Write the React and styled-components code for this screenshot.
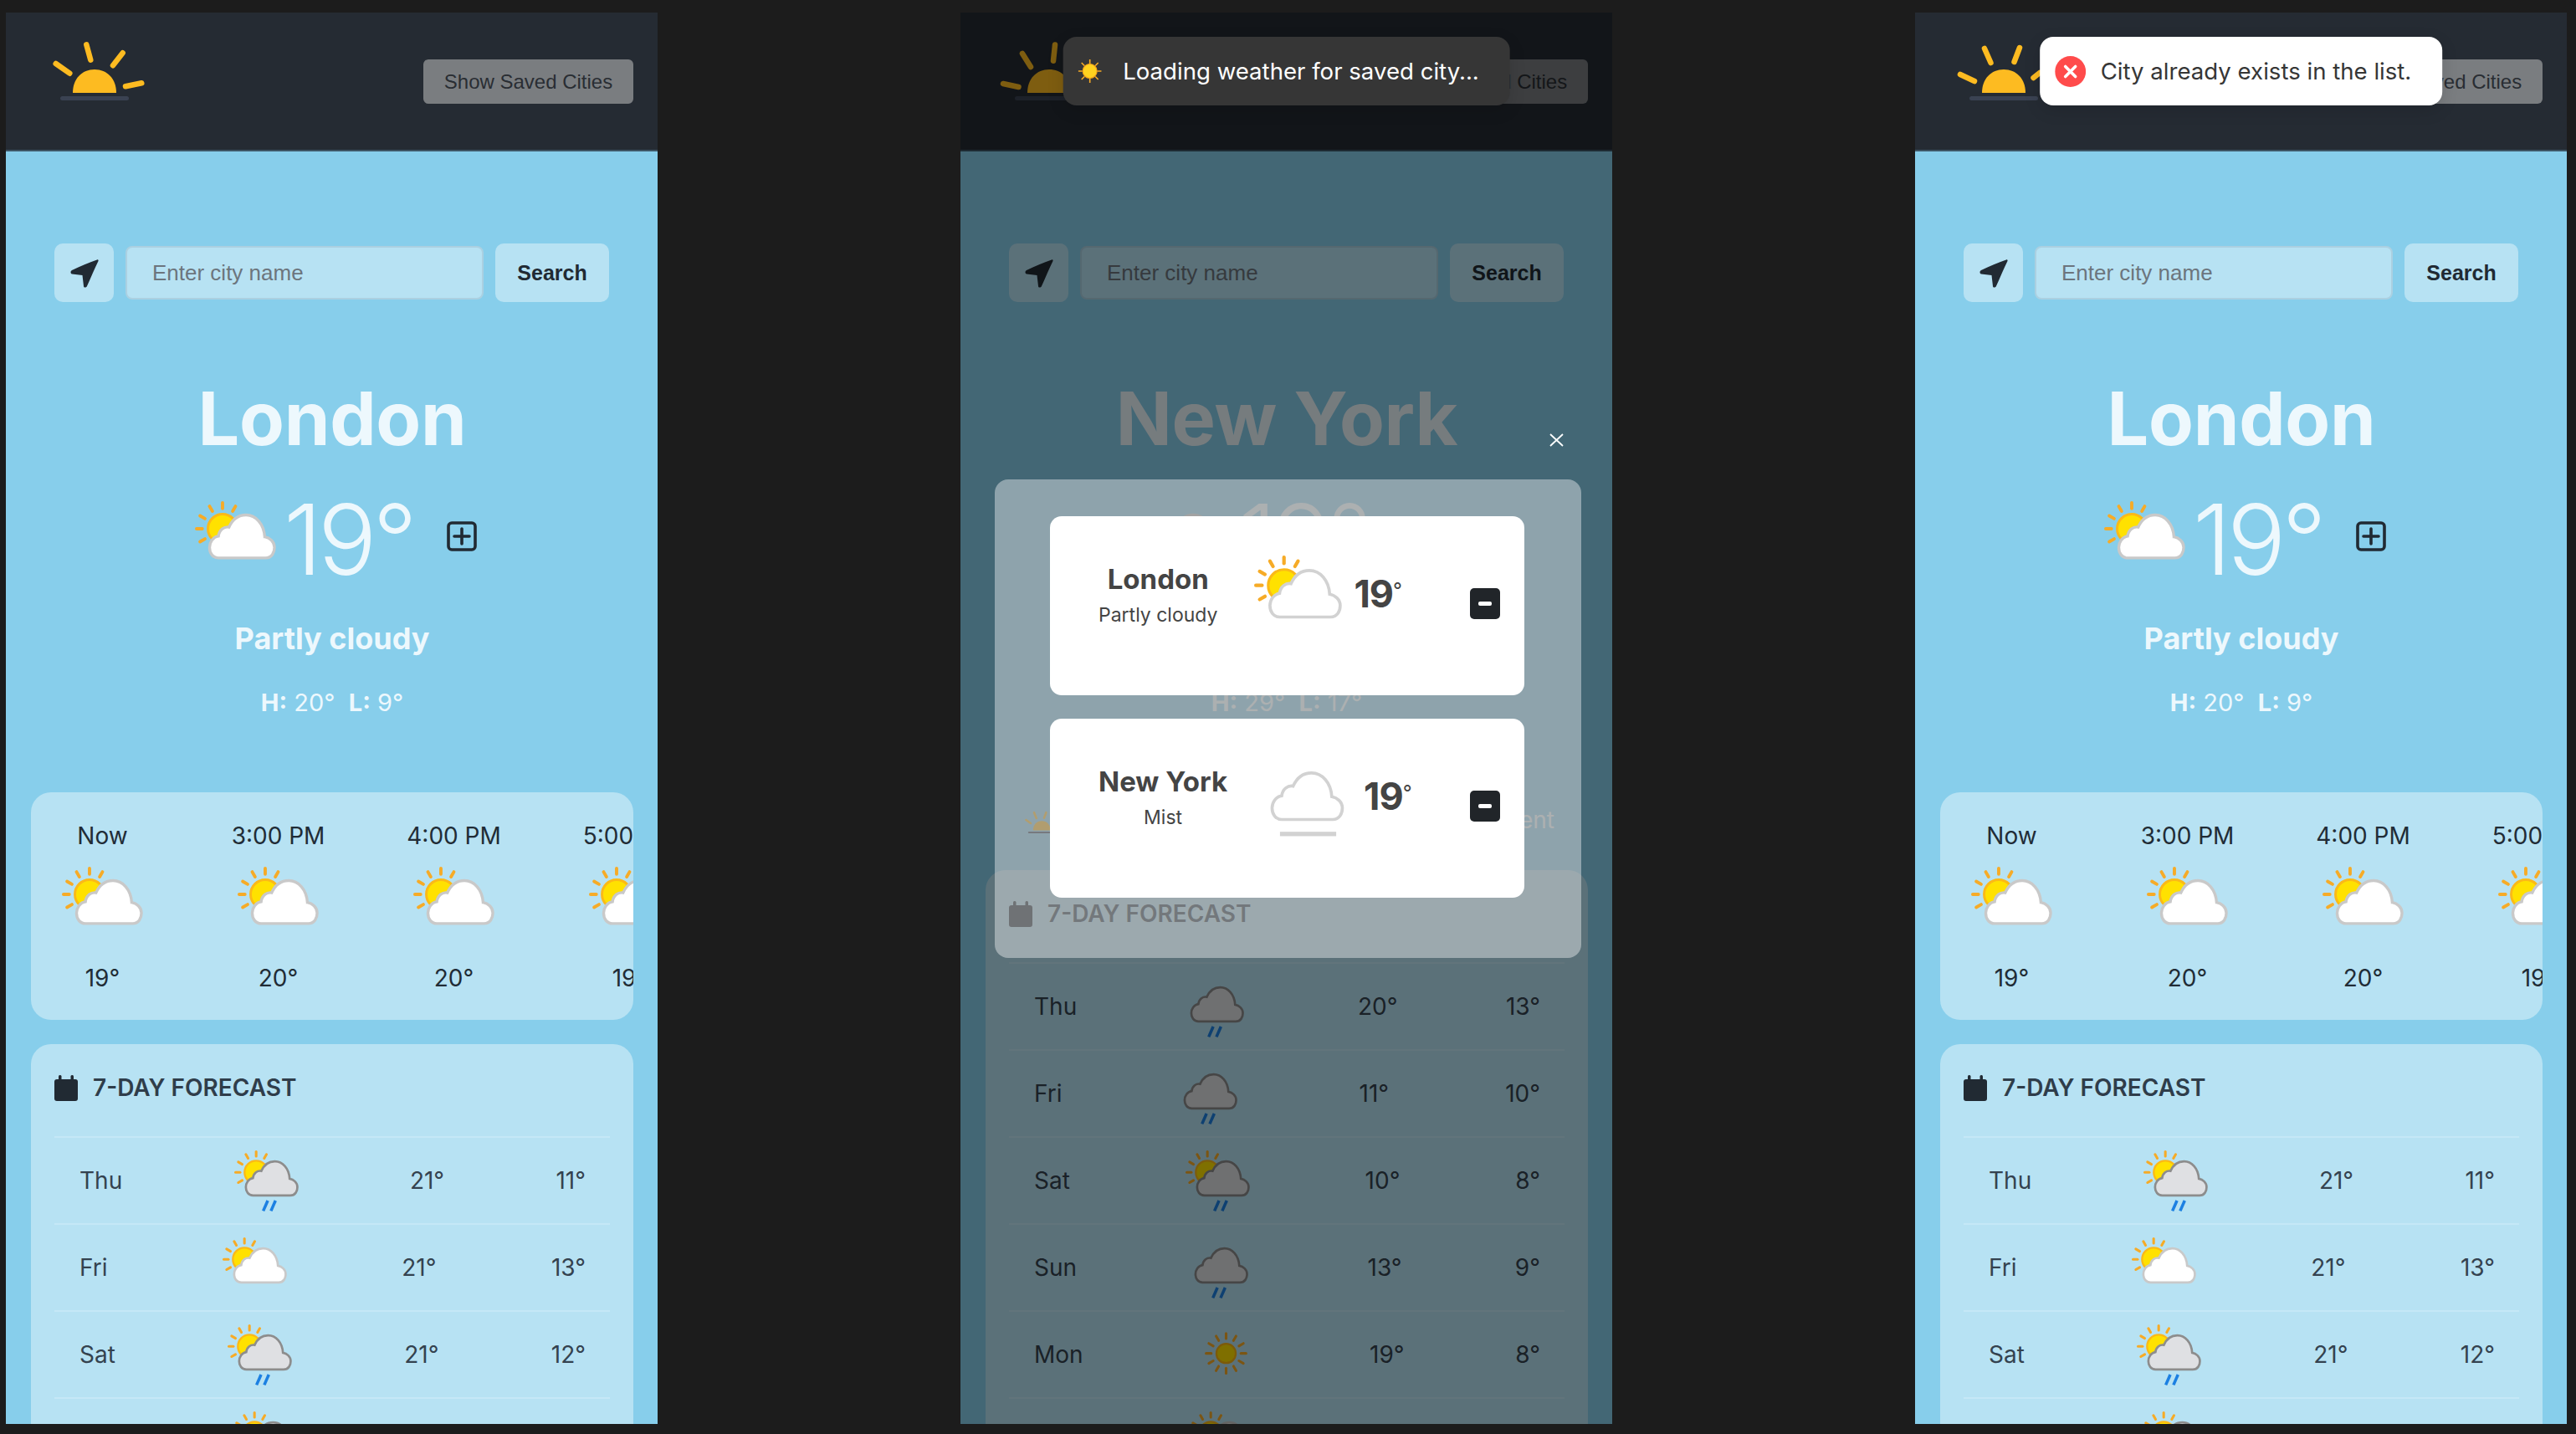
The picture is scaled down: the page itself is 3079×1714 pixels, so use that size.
import React from "react";
import styled, { createGlobalStyle } from "styled-components";

const GlobalStyle = createGlobalStyle`
    html, body {
        margin: 0;
        height: 1714px;
        overflow: hidden;
        background: #1c1c1c;
    }
    * {
        box-sizing: border-box;
    }
`;

const SKY = "#87ceeb";
const PANEL = "#b7e2f3";
const HERO_TEXT = "#edf8fd";
const DARK = "#212a33";

const londonDays = [
    { day: "Thu", icon: "sun-rain", high: 21, low: 11 },
    { day: "Fri", icon: "sun-cloud", high: 21, low: 13 },
    { day: "Sat", icon: "sun-rain", high: 21, low: 12 },
    { day: "Sun", icon: "sun-rain", high: 21, low: 12 },
];
const newYorkDays = [
    { day: "Thu", icon: "rain", high: 20, low: 13 },
    { day: "Fri", icon: "rain", high: 11, low: 10 },
    { day: "Sat", icon: "sun-rain", high: 10, low: 8 },
    { day: "Sun", icon: "rain", high: 13, low: 9 },
    { day: "Mon", icon: "sun", high: 19, low: 8 },
    { day: "Tue", icon: "sun-cloud", high: 18, low: 9 },
];
const hours = [
    { time: "Now", temp: 19 },
    { time: "3:00 PM", temp: 20 },
    { time: "4:00 PM", temp: 20 },
    { time: "5:00 PM", temp: 19 },
];

const CLOUD = "M29 70H87C95 70 98 63 98 57C98 50 92 45 86 44C85 28 75 17 63 17C53 17 46 23 42 32C36 31 30 35 29 43C22 44 18 51 18 57C18 64 22 70 29 70Z";

const Rays = ({ cx, cy, from, to, angles }) => (
    <g stroke="#f6ab27" strokeWidth="4" strokeLinecap="round">
        {angles.map((a) => {
            const r = (a * Math.PI) / 180;
            return (
                <line
                    key={a}
                    x1={cx + from * Math.cos(r)}
                    y1={cy - from * Math.sin(r)}
                    x2={cx + to * Math.cos(r)}
                    y2={cy - to * Math.sin(r)}
                />
            );
        })}
    </g>
);

const WeatherIcon = ({ kind, width, soft }) => {
    const hasSun = kind.startsWith("sun");
    const rainy = kind.endsWith("rain");
    const shift = hasSun ? 0 : -9;
    let cloudFill = "#ffffff";
    let cloudStroke = "#c9c9c9";
    if (rainy) {
        cloudFill = "#dfe0e3";
        cloudStroke = "#8d8d8d";
    }
    if (soft) cloudStroke = "#d2d2d2";

    return (
        <IconFrame $width={width} viewBox="0 0 100 94">
            {kind === "sun" && (
                <>
                    <Rays cx={50} cy={45} from={23} to={31} angles={[0, 30, 60, 90, 120, 150, 180, 210, 240, 270, 300, 330]} />
                    <circle cx="50" cy="45" r="15" fill="#ffdf00" stroke="#f9b414" strokeWidth="3" />
                </>
            )}
            {hasSun && kind !== "sun" && (
                <>
                    <Rays cx={34} cy={34} from={25} to={32} angles={[60, 90, 120, 150, 180, 210]} />
                    <circle cx="34" cy="34" r="18" fill="#ffe100" stroke="#fbb918" strokeWidth="3" />
                </>
            )}
            {kind !== "sun" && (
                <g transform={`translate(${shift} 0)`}>
                    <path d={CLOUD} fill={cloudFill} stroke={cloudStroke} strokeWidth="3.5" />
                    {rainy && (
                        <g stroke="#1c80e2" strokeWidth="4.6">
                            <line x1="45" y1="94" x2="52" y2="78" />
                            <line x1="57" y1="94" x2="64" y2="78" />
                        </g>
                    )}
                    {kind === "mist" && <rect x="27" y="84" width="64" height="5" fill="#d2d2d2" />}
                </g>
            )}
        </IconFrame>
    );
};

const Logo = ({ rays, small }) => (
    <LogoSvg $small={small} viewBox="0 0 120 80">
        <g stroke="#fdbb21" strokeWidth="6.5" strokeLinecap="round">
            {rays.map((r) => (
                <line key={r.join()} x1={r[0]} y1={r[1]} x2={r[2]} y2={r[3]} />
            ))}
        </g>
        <path d="M27 71C27 54 38 43 53 43C68 43 79 54 79 71Z" fill="#fdbb21" />
        <rect x="12" y="75" width="82" height="5" rx="2.5" fill="#3a4252" />
    </LogoSvg>
);

const GeoIcon = () => (
    <svg width="34" height="35" viewBox="0 0 34 35">
        <path
            d="M32 1.5C33 1 34 2 33.5 3C29 12 25 22 20 33C19 35 16 35 16 33L14.5 20L2 18.5C0 18 0 15 2 14C12 9 22 5 32 1.5Z"
            fill={DARK}
        />
    </svg>
);

const CalendarIcon = () => (
    <svg width="28" height="31" viewBox="0 0 28 31">
        <rect x="0" y="5" width="28" height="26" rx="3" fill={DARK} />
        <rect x="5" y="0" width="3.5" height="7" rx="1.5" fill={DARK} />
        <rect x="19.5" y="0" width="3.5" height="7" rx="1.5" fill={DARK} />
    </svg>
);

const PlusIcon = () => (
    <svg width="36" height="36" viewBox="0 0 36 36">
        <rect x="2" y="2" width="32" height="32" rx="4" fill="none" stroke={DARK} strokeWidth="3.6" />
        <path d="M18 9V27M9 18H27" stroke={DARK} strokeWidth="3.6" strokeLinecap="round" />
    </svg>
);

const ErrorIcon = () => (
    <svg width="37" height="37" viewBox="0 0 37 37">
        <circle cx="18.5" cy="18.5" r="18.5" fill="#ff4b4b" />
        <path d="M12.5 12.5L24.5 24.5M24.5 12.5L12.5 24.5" stroke="#fff" strokeWidth="3.6" strokeLinecap="round" />
    </svg>
);

const SunEmoji = () => (
    <svg width="28" height="28" viewBox="0 0 28 28">
        <g stroke="#f6ab27" strokeWidth="1.6">
            <path d="M14 0V5M14 23V28M0 14H5M23 14H28M4 4L7.5 7.5M24 4L20.5 7.5M4 24L7.5 20.5M24 24L20.5 20.5" />
        </g>
        <circle cx="14" cy="14" r="8.5" fill="#ffd21f" stroke="#f9a51a" strokeWidth="1.2" />
    </svg>
);

const CloseIcon = () => (
    <svg width="17" height="16" viewBox="0 0 17 16">
        <path d="M1 1L16 15M16 1L1 15" stroke="#fff" strokeWidth="1.8" />
    </svg>
);

const Screen = ({ logoRays, city, condition, currentIcon, high, low, days, children, showHourly = true }) => (
    <Phone>
        <Header>
            <Logo rays={logoRays} />
            <SavedButton>Show Saved Cities</SavedButton>
        </Header>
        <Main>
            <SearchRow>
                <SquareButton $width={71}>
                    <GeoIcon />
                </SquareButton>
                <CityInput placeholder="Enter city name" readOnly />
                <SquareButton $width={136}>Search</SquareButton>
            </SearchRow>
            <CityName>{city}</CityName>
            <CurrentRow>
                <WeatherIcon kind={currentIcon} width={97} />
                <CurrentTemp>19°</CurrentTemp>
                <AddButton>
                    <PlusIcon />
                </AddButton>
            </CurrentRow>
            <Condition>{condition}</Condition>
            <HighLow>
                <strong>H:</strong> {high}°&nbsp;&nbsp;<strong>L:</strong> {low}°
            </HighLow>
            {showHourly ? (
                <HourlyCard>
                    {hours.map((h) => (
                        <HourItem key={h.time}>
                            <HourText>{h.time}</HourText>
                            <WeatherIcon kind="sun-cloud" width={97} />
                            <HourTemp>{h.temp}°</HourTemp>
                        </HourItem>
                    ))}
                </HourlyCard>
            ) : (
                <SunNotice>
                    <Logo rays={[[30, 18, 37, 35], [66, 18, 60, 34], [6, 40, 20, 50], [98, 40, 86, 50]]} small />
                    <span>Sunset in a moment</span>
                </SunNotice>
            )}
            <ForecastCard>
                <ForecastTitle>
                    <CalendarIcon />
                    <span>7-DAY FORECAST</span>
                </ForecastTitle>
                {days.map((d) => (
                    <DayRow key={d.day}>
                        <DayName>{d.day}</DayName>
                        <WeatherIcon kind={d.icon} width={77} />
                        <DayTemp>{d.high}°</DayTemp>
                        <DayTemp>{d.low}°</DayTemp>
                    </DayRow>
                ))}
            </ForecastCard>
        </Main>
        {children}
    </Phone>
);

const SavedCity = ({ name, condition, icon }) => (
    <SavedCard>
        <SavedText>
            <SavedName>{name}</SavedName>
            <SavedCondition>{condition}</SavedCondition>
        </SavedText>
        <SavedIcon>
            <WeatherIcon kind={icon} width={105} soft />
        </SavedIcon>
        <SavedTemp>
            19<sup>°</sup>
        </SavedTemp>
        <RemoveButton>
            <span />
        </RemoveButton>
    </SavedCard>
);

export default function App() {
    return (
        <>
            <GlobalStyle />
            <Page>
                <Screen
                    logoRays={[[43.3, 13.3, 48.3, 31.7], [86.7, 23.3, 75, 38.3], [6.7, 36, 23.3, 47.7], [109.3, 59.3, 90, 63.3]]}
                    city="London"
                    condition="Partly cloudy"
                    currentIcon="sun-cloud"
                    high={20}
                    low={9}
                    days={londonDays}
                />
                <Screen
                    logoRays={[[60, 13.6, 58, 32.7], [21, 24, 31, 40], [-2, 60, 16.5, 64]]}
                    city="New York"
                    condition="Mist"
                    currentIcon="mist"
                    high={29}
                    low={17}
                    days={newYorkDays}
                    showHourly={false}
                >
                    <Dim>
                        <CloseSpot>
                            <CloseIcon />
                        </CloseSpot>
                        <Modal>
                            <SavedCity name="London" condition="Partly cloudy" icon="sun-cloud" />
                            <SavedCity name="New York" condition="Mist" icon="mist" />
                        </Modal>
                    </Dim>
                    <Toast $dark>
                        <SunEmoji />
                        <ToastText>Loading weather for saved city...</ToastText>
                    </Toast>
                </Screen>
                <Screen
                    logoRays={[[30, 18, 37.5, 35], [72, 17, 65.5, 34], [1, 49, 18, 57], [96, 47, 88.5, 53]]}
                    city="London"
                    condition="Partly cloudy"
                    currentIcon="sun-cloud"
                    high={20}
                    low={9}
                    days={londonDays}
                >
                    <Toast>
                        <ErrorIcon />
                        <ToastText>City already exists in the list.</ToastText>
                    </Toast>
                </Screen>
            </Page>
        </>
    );
}

const Page = styled.div`
    display: flex;
    gap: 362px;
    padding: 15px 0 0 7px;
    font-family: Inter, "Liberation Sans", sans-serif;
`;
const Phone = styled.div`
    position: relative;
    flex: 0 0 779px;
    height: 1687px;
    overflow: hidden;
    background: ${SKY};
`;
const Header = styled.header`
    display: flex;
    align-items: flex-start;
    justify-content: space-between;
    height: 166px;
    padding: 25px 29px 0 53px;
    background: #252b33;
    border-bottom: 2px solid #3d5666;
`;
const LogoSvg = styled.svg`
    flex: none;
    width: ${(p) => (p.$small ? 48 : 120)}px;
    height: ${(p) => (p.$small ? 32 : 80)}px;
    overflow: visible;
`;
const SavedButton = styled.button`
    width: 251px;
    height: 53px;
    margin-top: 31px;
    padding: 0;
    border: none;
    border-radius: 6px;
    background: #7a7d80;
    color: #292d33;
    font: 24px "Liberation Sans", Arial, sans-serif;
`;
const Main = styled.main`
    padding: 110px 29px 0 30px;
`;
const SearchRow = styled.div`
    display: flex;
    align-items: center;
    gap: 14px;
    padding: 0 0 0 28px;
    margin-right: 29px;
`;
const SquareButton = styled.button`
    flex: none;
    display: flex;
    align-items: center;
    justify-content: center;
    width: ${(p) => p.$width}px;
    height: 70px;
    padding: 0;
    border: none;
    border-radius: 10px;
    background: ${PANEL};
    color: ${DARK};
    font: bold 25px "Liberation Sans", Arial, sans-serif;
`;
const CityInput = styled.input`
    flex: 1;
    min-width: 0;
    height: 64px;
    padding: 0 0 0 30px;
    border: 2px solid #abd0e1;
    border-radius: 8px;
    background: ${PANEL};
    font: 26px "Liberation Sans", Arial, sans-serif;
    &::placeholder {
        color: #6c757d;
        opacity: 1;
    }
`;
const CityName = styled.h1`
    margin: 89px 0 0;
    color: ${HERO_TEXT};
    font-size: 88px;
    font-weight: 700;
    letter-spacing: -0.3px;
    line-height: 100px;
    text-align: center;
`;
const CurrentRow = styled.div`
    display: flex;
    align-items: center;
    height: 130px;
    margin-top: 30px;
    padding-left: 196px;
`;
const IconFrame = styled.svg`
    flex: none;
    display: block;
    width: ${(p) => p.$width}px;
    height: ${(p) => p.$width * 0.94}px;
    overflow: visible;
`;
const CurrentTemp = styled.div`
    width: 160px;
    margin-left: 9px;
    color: ${HERO_TEXT};
    font-size: 117px;
    font-weight: 300;
    letter-spacing: -5px;
    line-height: 130px;
`;
const AddButton = styled.div`
    display: flex;
    margin: 0 0 8px 35px;
`;
const Condition = styled.div`
    margin-top: 30px;
    color: ${HERO_TEXT};
    font-size: 36px;
    font-weight: 700;
    line-height: 46px;
    text-align: center;
`;
const HighLow = styled.div`
    margin-top: 34px;
    color: ${HERO_TEXT};
    font-size: 29px;
    line-height: 40px;
    text-align: center;
    strong {
        font-weight: 700;
    }
`;
const HourlyCard = styled.section`
    display: flex;
    gap: 113px;
    height: 272px;
    margin-top: 87px;
    padding: 31px 0 0 37px;
    overflow: hidden;
    border-radius: 24px;
    background: ${PANEL};
`;
const HourItem = styled.div`
    flex: 0 0 97px;
    min-width: 0;
    display: flex;
    flex-direction: column;
    align-items: center;
`;
const HourText = styled.div`
    height: 58px;
    color: #212c36;
    font-size: 28px;
    line-height: 42px;
    white-space: nowrap;
`;
const HourTemp = styled.div`
    margin-top: 21px;
    color: #212c36;
    font-size: 28px;
    line-height: 42px;
    white-space: nowrap;
`;
const SunNotice = styled.section`
    display: flex;
    align-items: center;
    justify-content: space-between;
    height: 63px;
    margin-top: 88px;
    padding: 0 40px 0 46px;
    color: #edf8fd;
    font-size: 28px;
`;
const ForecastCard = styled.section`
    margin-top: 29px;
    padding: 32px 28px 0;
    border-radius: 24px;
    background: ${PANEL};
`;
const ForecastTitle = styled.h2`
    display: flex;
    align-items: center;
    gap: 18px;
    height: 40px;
    margin: 0 0 38px;
    color: #2f3d4a;
    font-size: 28px;
    font-weight: 600;
`;
const DayRow = styled.div`
    display: flex;
    align-items: center;
    justify-content: space-between;
    height: 104px;
    padding: 0 29px 0 30px;
    border-top: 2px solid #c5e8f6;
`;
const DayName = styled.div`
    color: #34424f;
    font-size: 28px;
`;
const DayTemp = styled.div`
    color: #34424f;
    font-size: 28px;
`;
const Dim = styled.div`
    position: absolute;
    inset: 0;
    background: rgba(0, 0, 0, 0.5);
`;
const CloseSpot = styled.div`
    position: absolute;
    top: 503px;
    left: 704px;
    display: flex;
`;
const Modal = styled.div`
    position: absolute;
    top: 558px;
    left: 41px;
    display: flex;
    flex-direction: column;
    gap: 28px;
    width: 701px;
    height: 572px;
    padding: 44px 68px 0 66px;
    border-radius: 16px;
    background: rgba(255, 255, 255, 0.4);
`;
const SavedCard = styled.div`
    display: flex;
    align-items: flex-start;
    height: 214px;
    padding: 0 29px 0 58px;
    border-radius: 14px;
    background: #fff;
`;
const SavedText = styled.div`
    padding-top: 55px;
    text-align: center;
`;
const SavedName = styled.div`
    color: #444;
    font-size: 33px;
    font-weight: 700;
    line-height: 40px;
`;
const SavedCondition = styled.div`
    margin-top: 8px;
    color: #444;
    font-size: 23px;
    line-height: 30px;
    white-space: nowrap;
`;
const SavedIcon = styled.div`
    margin: 47px 0 0 44px;
`;
const SavedTemp = styled.div`
    margin: 68px 0 0 14px;
    color: #444;
    font-size: 45px;
    font-weight: 700;
    letter-spacing: -1px;
    line-height: 50px;
    sup {
        font-size: 24px;
        font-weight: 400;
        line-height: 0;
        vertical-align: 12px;
    }
`;
const RemoveButton = styled.div`
    display: flex;
    align-items: center;
    justify-content: center;
    width: 36px;
    height: 37px;
    margin: 86px 0 0 auto;
    border-radius: 5px;
    background: #212529;
    span {
        width: 16px;
        height: 5px;
        border-radius: 2px;
        background: #fff;
    }
`;
const Toast = styled.div`
    position: absolute;
    top: 29px;
    left: 50%;
    transform: translateX(-50%);
    display: flex;
    align-items: center;
    gap: ${(p) => (p.$dark ? 26 : 18)}px;
    height: 82px;
    padding: 0 37px 0 18px;
    border-radius: 16px;
    background: ${(p) => (p.$dark ? "#363636" : "#fff")};
    color: ${(p) => (p.$dark ? "#fff" : "#363636")};
    box-shadow: 0 6px 20px rgba(0, 0, 0, 0.12);
    white-space: nowrap;
`;
const ToastText = styled.span`
    font-size: 27.6px;
`;
